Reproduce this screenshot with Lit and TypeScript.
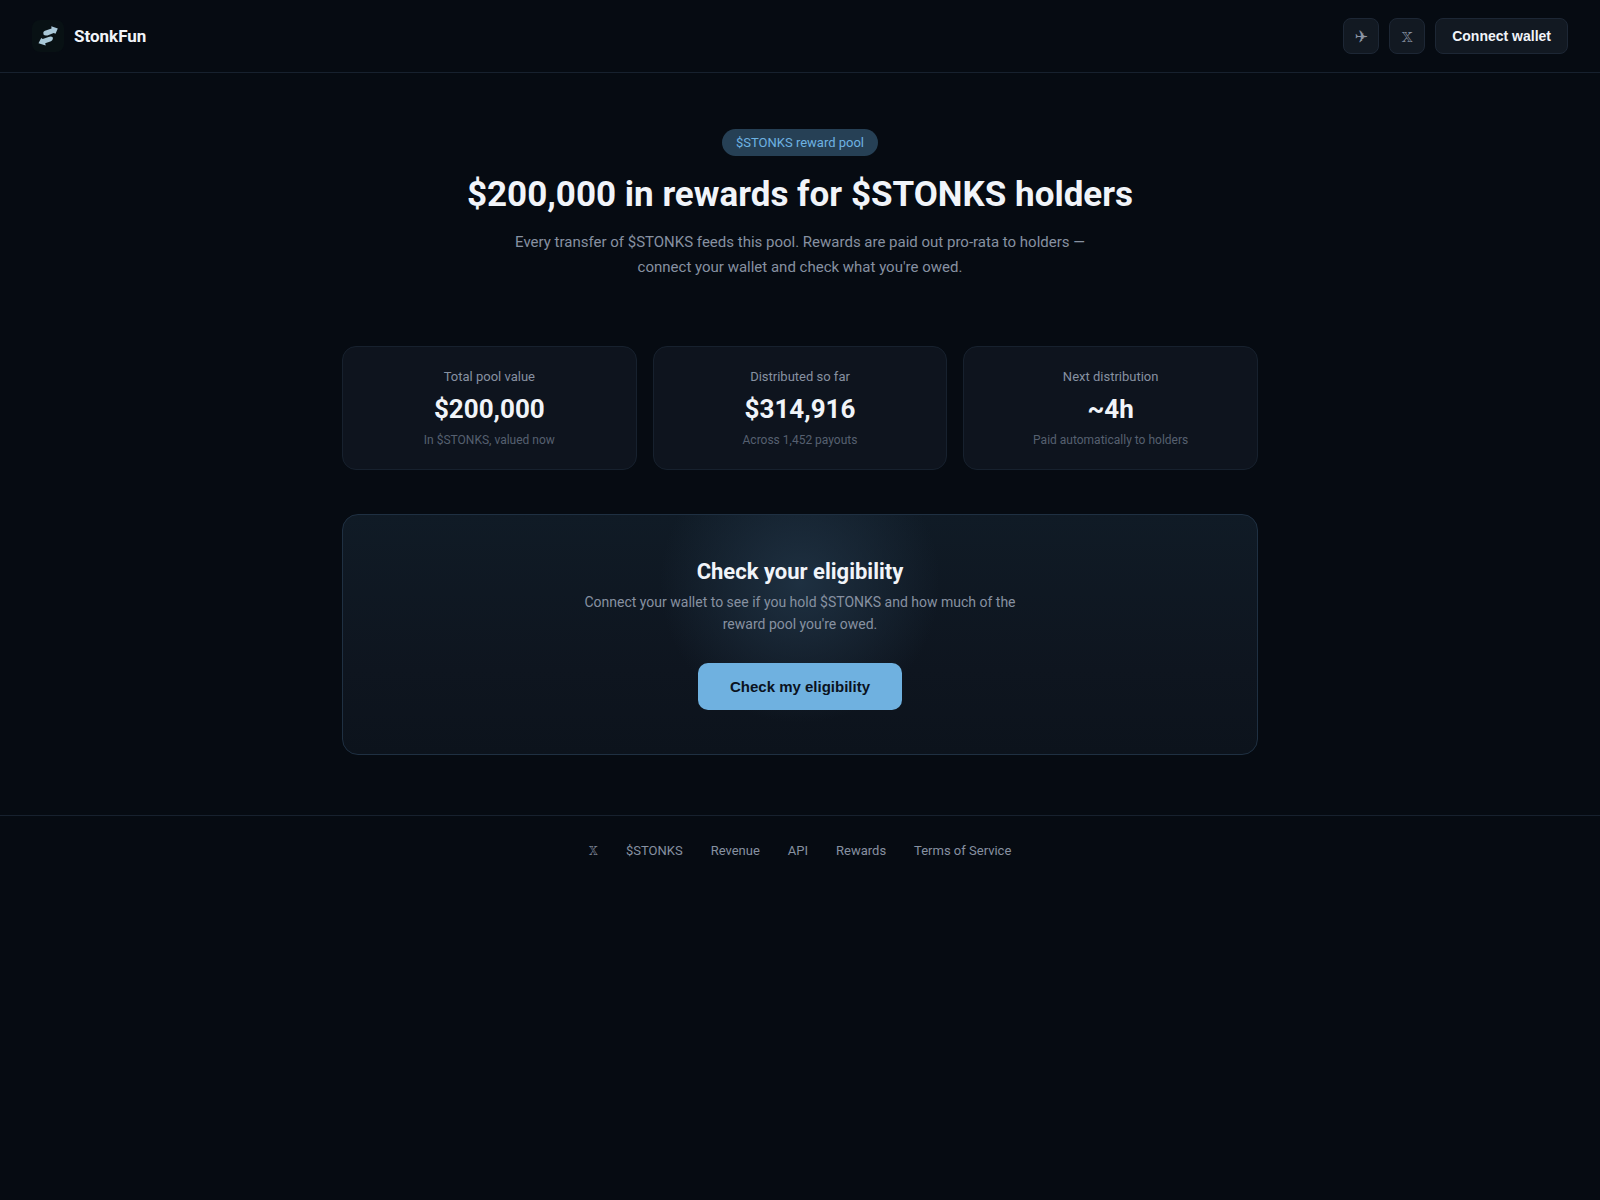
import { LitElement, html, css } from "lit";
import { customElement } from "lit/decorators.js";

interface Stat {
  label: string;
  value: string;
  note: string;
}

const STATS: Stat[] = [
  { label: "Total pool value", value: "$200,000", note: "In $STONKS, valued now" },
  { label: "Distributed so far", value: "$314,916", note: "Across 1,452 payouts" },
  { label: "Next distribution", value: "~4h", note: "Paid automatically to holders" },
];

const LINKS = ["𝕏", "$STONKS", "Revenue", "API", "Rewards", "Terms of Service"];

@customElement("app-root")
export class AppRoot extends LitElement {
  static styles = css`
    :host {
      display: block;
      min-height: 100vh;
      background: #060b12;
      color: #f1f4f9;
      font: 400 16px/24px Roboto, FreeSerif, "DejaVu Serif", sans-serif;
    }
    * { box-sizing: border-box; }
    h1, h2, p { margin: 0; }
    a { color: inherit; text-decoration: none; }
    .header {
      display: flex;
      align-items: center;
      justify-content: space-between;
      padding: 18px 32px;
      border-bottom: 1px solid #17212e;
    }
    .brand { display: flex; align-items: center; gap: 10px; font-size: 17px; font-weight: 700; }
    .logo { display: block; width: 32px; height: 32px; }
    .actions { display: flex; gap: 10px; }
    .icon, .connect {
      display: flex;
      align-items: center;
      justify-content: center;
      height: 36px;
      border: 1px solid #1d2735;
      border-radius: 8px;
      background: #121922;
    }
    .icon { width: 36px; padding-top: 2px; color: #8c95a5; font-size: 16px; }
    .connect { padding: 0 16px; color: #f1f4f9; font: 700 14px "Liberation Sans", sans-serif; }
    .main {
      max-width: 980px;
      margin: 0 auto;
      padding: 56px 32px 60px;
    }
    .hero { display: flex; flex-direction: column; align-items: center; text-align: center; }
    .pill {
      padding: 6px 14px;
      border-radius: 14px;
      background: #264055;
      color: #6eb2e2;
      font-size: 13px;
      line-height: 15px;
    }
    .title { margin-top: 18px; font-size: 35px; line-height: 42px; font-weight: 700; }
    .lead { max-width: 620px; margin-top: 14px; color: #8791a1; font-size: 15px; line-height: 25px; }
    .stats {
      display: grid;
      grid-template-columns: repeat(auto-fit, minmax(240px, 1fr));
      gap: 16px;
      margin-top: 66px;
    }
    .stat {
      padding: 21px;
      border: 1px solid #17212e;
      border-radius: 14px;
      background: #0e141e;
      text-align: center;
    }
    .label { color: #8791a1; font-size: 13px; line-height: 18px; }
    .value { margin: 8px 0; font-size: 26px; line-height: 30px; font-weight: 700; }
    .note { color: #566070; font-size: 12px; line-height: 16px; }
    .check {
      display: flex;
      flex-direction: column;
      align-items: center;
      margin-top: 44px;
      padding: 44px 32px;
      border: 1px solid #1f3042;
      border-radius: 16px;
      background:
        radial-gradient(circle 140px at 50% 68px, #1e3041, #1e304100),
        linear-gradient(#101b26, #0e151f 65%, #0c131c);
      text-align: center;
    }
    .subtitle { font-size: 22px; line-height: 26px; font-weight: 700; }
    .text { max-width: 460px; margin-top: 6px; color: #8791a1; font-size: 14px; line-height: 22px; }
    .primary {
      margin-top: 28px;
      padding: 15px 32px;
      border: 0;
      border-radius: 10px;
      background: #6fb1e0;
      color: #0a1220;
      font: 700 15px/17px "Liberation Sans", sans-serif;
    }
    .footer {
      display: flex;
      flex-wrap: wrap;
      justify-content: center;
      gap: 28px;
      padding: 27px 32px;
      border-top: 1px solid #17212e;
      color: #8791a1;
      font-size: 13px;
      line-height: 16px;
    }
  `;

  render() {
    return html`
      <header class="header">
        <a class="brand" href="#">
          <svg class="logo" viewBox="0 0 32 32" aria-hidden="true">
            <rect width="32" height="32" rx="8" fill="#081114" />
            <g fill="#a9c8d8">
              <path d="M11.300 12.600 Q11.500 11.300 13 10.700 L19.500 8.500 19.300 6.300 25.800 8.500 23.500 13.800 21.700 12.900 15.500 15.400 Q12.500 16 11.500 14.500Z" />
              <path d="M20.900 18.700 Q20.500 20.600 19 21.200 L13.200 23.200 13.700 25.500 6.500 23.200 9.200 17.900 10.700 19.100 16.500 16.900 Q19.500 16 20.700 17.300Z" />
            </g>
          </svg>
          <span>StonkFun</span>
        </a>
        <div class="actions">
          <a class="icon" href="#" aria-label="Telegram">✈</a>
          <a class="icon" href="#" aria-label="X">𝕏</a>
          <button class="connect" type="button">Connect wallet</button>
        </div>
      </header>
      <main class="main">
        <section class="hero">
          <span class="pill">$STONKS reward pool</span>
          <h1 class="title">$200,000 in rewards for $STONKS holders</h1>
          <p class="lead">Every transfer of $STONKS feeds this pool. Rewards are paid out pro-rata to holders — connect your wallet and check what you're owed.</p>
        </section>
        <section class="stats">
          ${STATS.map((s) => html`
            <div class="stat">
              <div class="label">${s.label}</div>
              <div class="value">${s.value}</div>
              <div class="note">${s.note}</div>
            </div>
          `)}
        </section>
        <section class="check">
          <h2 class="subtitle">Check your eligibility</h2>
          <p class="text">Connect your wallet to see if you hold $STONKS and how much of the reward pool you're owed.</p>
          <button class="primary" type="button">Check my eligibility</button>
        </section>
      </main>
      <footer class="footer">
        ${LINKS.map((l) => html`<a href="#">${l}</a>`)}
      </footer>
    `;
  }
}
